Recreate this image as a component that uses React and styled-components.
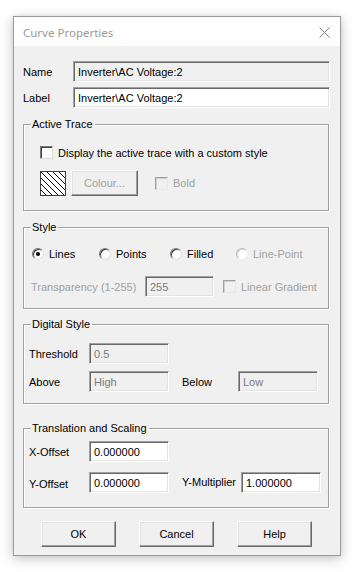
import React from "react";
import styled, { createGlobalStyle } from "styled-components";

const Global = createGlobalStyle`
  html, body { margin: 0; padding: 0; background: #ffffff; }
  body { font-family: "Liberation Sans", Arial, sans-serif; font-size: 11px; color: #000; }
  * { box-sizing: border-box; }
`;

const Page = styled.div`
  padding: 16px 0 0 13px;
  width: 355px;
  height: 572px;
`;

const Window = styled.div`
  width: 328px;
  height: 540px;
  border: 1px solid #9c9c9c;
  background: #f0f0f0;
  box-shadow: 0 3px 12px rgba(0, 0, 0, 0.22), 0 0 4px rgba(0, 0, 0, 0.08);
  display: flex;
  flex-direction: column;
`;

const TitleBar = styled.div`
  height: 29px;
  background: #ffffff;
  display: flex;
  align-items: center;
  justify-content: space-between;
  padding: 0 10px 0 9px;
`;

const Title = styled.span`
  font-family: "Segoe UI", "Noto Sans", "Open Sans", sans-serif;
  font-size: 11.5px;
  color: #9a9a9a;
  margin-top: 1px;
`;

const CloseIcon = styled.svg`
  width: 11px;
  height: 11px;
  margin-top: 1px;
`;

const Body = styled.div`
  flex: 1;
  padding: 15px 0 0 9px;
  display: flex;
  flex-direction: column;
`;

const Row = styled.div`
  display: flex;
  align-items: center;
  height: ${(p) => p.$h || 21}px;
  margin-top: ${(p) => p.$mt || 0}px;
`;

const Label = styled.span`
  width: ${(p) => (p.$w ? `${p.$w}px` : "auto")};
  flex: none;
  color: ${(p) => (p.$disabled ? "#a0a0a0" : "#000")};
  white-space: nowrap;
  margin-top: ${(p) => p.$dy || 0}px;
  margin-left: ${(p) => p.$ml || 0}px;
`;

const TextBox = styled.div`
  width: ${(p) => p.$w}px;
  height: 21px;
  flex: none;
  display: flex;
  align-items: center;
  padding-left: 4px;
  background: ${(p) => (p.$disabled ? "#f0f0f0" : "#ffffff")};
  color: ${(p) => (p.$disabled && !p.$darkText ? "#7a7a7a" : "#000")};
  border-top: 1px solid #a0a0a0;
  border-left: 1px solid #a0a0a0;
  border-right: 1px solid #ffffff;
  border-bottom: 1px solid #ffffff;
  box-shadow: inset 1px 1px 0 #696969, inset -1px -1px 0 #e3e3e3;
  white-space: nowrap;
  overflow: hidden;
`;

const Group = styled.div`
  margin-top: ${(p) => p.$mt}px;
  width: 306px;
  border: 1px solid #a0a0a0;
  box-shadow: inset 1px 1px 0 #ffffff, 1px 1px 0 #ffffff;
  padding-bottom: ${(p) => p.$pb}px;
  display: flex;
  flex-direction: column;
`;

const Legend = styled.span`
  display: block;
  width: fit-content;
  margin: -7px 0 0 7px;
  padding: 0 2px 0 1px;
  line-height: 13px;
  height: 13px;
  background: #f0f0f0;
`;

const GroupBody = styled.div`
  display: flex;
  flex-direction: column;
  padding-left: ${(p) => p.$pl}px;
`;

const Check = styled.span`
  width: 13px;
  height: 13px;
  flex: none;
  background: ${(p) => (p.$disabled ? "#f0f0f0" : "#ffffff")};
  border-top: 1px solid ${(p) => (p.$disabled ? "#a0a0a0" : "#7a7a7a")};
  border-left: 1px solid ${(p) => (p.$disabled ? "#a0a0a0" : "#7a7a7a")};
  border-right: 1px solid ${(p) => (p.$disabled ? "#e8e8e8" : "#dcdcdc")};
  border-bottom: 1px solid ${(p) => (p.$disabled ? "#e8e8e8" : "#dcdcdc")};
  box-shadow: ${(p) => (p.$disabled ? "inset 1px 1px 0 #d0d0d0" : "inset 1px 1px 0 #404040")};
  margin-left: ${(p) => p.$ml || 0}px;
  margin-right: 5px;
`;

const RadioItem = styled.div`
  width: ${(p) => p.$w}px;
  flex: none;
  display: flex;
  align-items: center;
  color: ${(p) => (p.$disabled ? "#a0a0a0" : "#000")};
`;

const RadioCircle = styled.span`
  width: 12px;
  height: 12px;
  flex: none;
  border-radius: 50%;
  background: #ffffff;
  border: 1px solid;
  border-color: ${(p) =>
    p.$disabled ? "#b8b8b8 #f0f0f0 #f0f0f0 #b8b8b8" : "#7a7a7a #e0e0e0 #e0e0e0 #7a7a7a"};
  box-shadow: ${(p) => (p.$disabled ? "inset 1px 1px 0 #d8d8d8" : "inset 1px 1px 0 #404040")};
  display: flex;
  align-items: center;
  justify-content: center;
  margin-right: 5px;
  &::after {
    content: "";
    display: ${(p) => (p.$on ? "block" : "none")};
    width: 4px;
    height: 4px;
    border-radius: 50%;
    background: #000;
  }
`;

const Hatch = styled.svg`
  width: 26px;
  height: 25px;
  flex: none;
  display: block;
`;

const Button = styled.div`
  width: ${(p) => p.$w || 75}px;
  height: 26px;
  flex: none;
  display: flex;
  align-items: center;
  justify-content: center;
  background: #f0f0f0;
  color: ${(p) => (p.$disabled ? "#a0a0a0" : "#000")};
  border-top: 1px solid #ffffff;
  border-left: 1px solid #ffffff;
  border-right: 1px solid #696969;
  border-bottom: 1px solid #696969;
  box-shadow: inset -1px -1px 0 #a0a0a0, inset 1px 1px 0 #e3e3e3;
  margin-left: ${(p) => p.$ml || 0}px;
`;

const ButtonRow = styled.div`
  display: flex;
  margin-top: 13px;
  padding-left: 18px;
  gap: 23px;
`;

export default function App() {
  return (
    <>
      <Global />
      <Page>
        <Window>
          <TitleBar>
            <Title>Curve Properties</Title>
            <CloseIcon viewBox="0 0 11 11">
              <path d="M0.5 0.5 L10.5 10.5 M10.5 0.5 L0.5 10.5" stroke="#808080" strokeWidth="1" fill="none" />
            </CloseIcon>
          </TitleBar>
          <Body>
            <Row>
              <Label $w={50}>Name</Label>
              <TextBox $w={257} $disabled $darkText>Inverter\AC Voltage:2</TextBox>
            </Row>
            <Row $mt={5}>
              <Label $w={50}>Label</Label>
              <TextBox $w={257}>Inverter\AC Voltage:2</TextBox>
            </Row>

            <Group $mt={16} $pb={14}>
              <Legend>Active Trace</Legend>
              <GroupBody $pl={16}>
                <Row $mt={15} $h={13}>
                  <Check />
                  <Label>Display the active trace with a custom style</Label>
                </Row>
                <Row $mt={11} $h={26}>
                  <Hatch viewBox="0 0 26 25">
                    <defs>
                      <clipPath id="hc">
                        <rect x="1" y="1" width="24" height="23" />
                      </clipPath>
                    </defs>
                    <rect x="0" y="0" width="26" height="25" fill="#ffffff" />
                    <g clipPath="url(#hc)" stroke="#000" strokeWidth="1">
                      {[-24, -18, -12, -6, 0, 6, 12, 18, 24].map((o) => (
                        <line key={o} x1={o} y1={0} x2={o + 26} y2={26} />
                      ))}
                    </g>
                    <rect x="0.5" y="0.5" width="25" height="24" fill="none" stroke="#404040" strokeWidth="1" />
                  </Hatch>
                  <Button $w={67} $ml={5} $disabled>Colour...</Button>
                  <Check $disabled $ml={17} />
                  <Label $disabled>Bold</Label>
                </Row>
              </GroupBody>
            </Group>

            <Group $mt={16} $pb={11}>
              <Legend>Style</Legend>
              <GroupBody $pl={8}>
                <Row $mt={13} $h={13}>
                  <RadioItem $w={67}>
                    <RadioCircle $on />
                    Lines
                  </RadioItem>
                  <RadioItem $w={71}>
                    <RadioCircle />
                    Points
                  </RadioItem>
                  <RadioItem $w={66}>
                    <RadioCircle />
                    Filled
                  </RadioItem>
                  <RadioItem $w={90} $disabled>
                    <RadioCircle $disabled />
                    Line-Point
                  </RadioItem>
                </Row>
                <Row $mt={16}>
                  <Label $w={114} $ml={-1} $disabled>
                    Transparency (1-255)
                  </Label>
                  <TextBox $w={69} $disabled>255</TextBox>
                  <Check $disabled $ml={9} />
                  <Label $disabled>Linear Gradient</Label>
                </Row>
              </GroupBody>
            </Group>

            <Group $mt={15} $pb={11}>
              <Legend>Digital Style</Legend>
              <GroupBody $pl={5}>
                <Row $mt={12}>
                  <Label $w={60}>Threshold</Label>
                  <TextBox $w={80} $disabled>0.5</TextBox>
                </Row>
                <Row $mt={7}>
                  <Label $w={60}>Above</Label>
                  <TextBox $w={80} $disabled>High</TextBox>
                  <Label $w={56} $ml={13}>Below</Label>
                  <TextBox $w={80} $disabled>Low</TextBox>
                </Row>
              </GroupBody>
            </Group>

            <Group $mt={24} $pb={14}>
              <Legend>Translation and Scaling</Legend>
              <GroupBody $pl={5}>
                <Row $mt={6}>
                  <Label $w={60}>X-Offset</Label>
                  <TextBox $w={80}>0.000000</TextBox>
                </Row>
                <Row $mt={10}>
                  <Label $w={60} $dy={2}>Y-Offset</Label>
                  <TextBox $w={80}>0.000000</TextBox>
                  <Label $w={59} $ml={13} $dy={-2}>Y-Multiplier</Label>
                  <TextBox $w={80}>1.000000</TextBox>
                </Row>
              </GroupBody>
            </Group>

            <ButtonRow>
              <Button>OK</Button>
              <Button>Cancel</Button>
              <Button>Help</Button>
            </ButtonRow>
          </Body>
        </Window>
      </Page>
    </>
  );
}
